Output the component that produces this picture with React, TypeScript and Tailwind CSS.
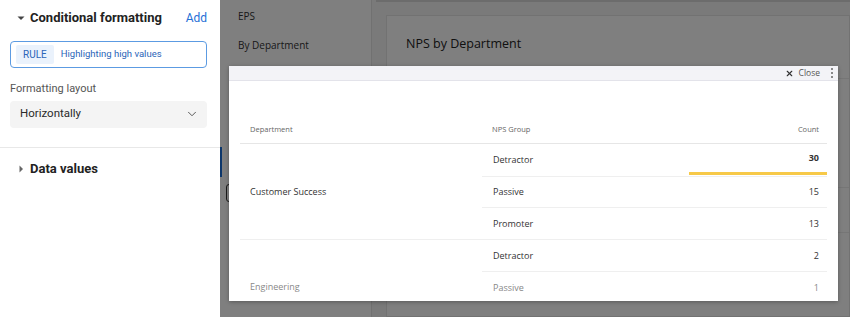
import React from "react";
import { ChevronDown, X } from "lucide-react";

const rows = [
  { dept: "Customer Success", items: [{ group: "Detractor", count: 30, top: true }, { group: "Passive", count: 15 }, { group: "Promoter", count: 13 }] },
  { dept: "Engineering", faded: true, items: [{ group: "Detractor", count: 2 }, { group: "Passive", count: 1 }] },
];

function Caret({ dir }: { dir: "down" | "right" }) {
  return (
    <svg width="8" height="8" viewBox="0 0 8 8" className="shrink-0">
      {dir === "down" ? <path d="M0.5 2.5 L7.5 2.5 L4 6 Z" fill="#444" /> : <path d="M2.5 0.5 L6 4 L2.5 7.5 Z" fill="#666" />}
    </svg>
  );
}

function SidePanel() {
  return (
    <div className="w-[220px] shrink-0 bg-white flex flex-col font-['Roboto',sans-serif]">
      <div className="pl-[10px] pr-[13px] pt-[9px] pb-[19px] border-b border-[#e8e8e8]">
        <div className="flex items-center h-[18px] pl-[7px]">
          <Caret dir="down" />
          <span className="ml-[5px] text-[13px] font-bold text-[#222]">Conditional formatting</span>
          <span className="ml-auto text-[12px] text-[#1f6fd6]">Add</span>
        </div>
        <div className="mt-[14px] h-[27px] border border-[#5c9be2] rounded-[4px] flex items-center px-[5px]">
          <span className="h-[19px] px-[7px] flex items-center bg-[#eaf2fc] rounded-[2px] text-[10px] text-[#2b65b8]">RULE</span>
          <span className="ml-[7px] text-[9.5px] text-[#2b65b8]">Highlighting high values</span>
        </div>
        <div className="mt-[13px] text-[11px] text-[#555]">Formatting layout</div>
        <div className="mt-[3px] h-[27px] bg-[#f4f4f4] rounded-[4px] flex items-center pl-[10px] pr-[8px]">
          <span className="text-[11.5px] text-[#2a2a2a]">Horizontally</span>
          <ChevronDown className="ml-auto w-[14px] h-[14px] text-[#444]" strokeWidth={1.5} />
        </div>
      </div>
      <div className="flex items-center h-[18px] mt-[12px] pl-[17px]">
        <Caret dir="right" />
        <span className="ml-[5px] text-[13px] font-bold text-[#222]">Data values</span>
      </div>
    </div>
  );
}

function Backdrop() {
  return (
    <div className="absolute inset-0 flex bg-[#f4f4f4] font-['Open_Sans',sans-serif]">
      <div className="w-[152px] shrink-0 bg-white border-r border-[#e2e2e2] flex flex-col">
        <div className="pt-[8px] pl-[18px] text-[10px] text-[#333] leading-[16px]">EPS</div>
        <div className="mt-[13px] pl-[18px] text-[10px] text-[#333] leading-[16px]">By Department</div>
        <div className="mt-[94px] w-[2px] h-[30px] bg-[#1a6fd6]" />
        <div className="mt-[7px] ml-[6px] w-[40px] h-[18px] border border-[#333] rounded-[3px]" />
      </div>
      <div className="flex-1 flex flex-col">
        <div className="h-[2px] ml-[4px] bg-[#d8d8d8]" />
        <div className="mt-[13px] ml-[14px] flex-1 bg-white border border-[#e4e4e4] flex flex-col">
          <div className="pt-[19px] pl-[19px] text-[12.5px] text-[#222]">NPS by Department</div>
          <div className="mt-[24px] border-b border-[#ececec]" />
          <div className="mt-[108px] border-b border-[#ececec]" />
          <div className="mt-[44px] border-b border-[#ececec]" />
        </div>
      </div>
      <div className="absolute inset-0 bg-black/50" />
    </div>
  );
}

function Modal() {
  return (
    <div className="absolute left-[9px] top-[66px] w-[609px] h-[235px] bg-white shadow-[0_1px_4px_rgba(0,0,0,0.3)] flex flex-col overflow-hidden font-['Open_Sans',sans-serif]">
      <div className="h-[15px] shrink-0 bg-[#f3f3f7] border-b border-[#e3e3ea] flex items-center justify-end pr-[5px]">
        <X className="w-[9px] h-[9px] text-[#333]" strokeWidth={3} />
        <span className="ml-[5px] text-[8.5px] text-[#555]">Close</span>
        <span className="ml-[11px] flex flex-col gap-[2px]">
          <span className="w-[2px] h-[2px] rounded-full bg-[#666]" />
          <span className="w-[2px] h-[2px] rounded-full bg-[#666]" />
          <span className="w-[2px] h-[2px] rounded-full bg-[#666]" />
        </span>
      </div>
      <div className="px-[11px] pt-[35px] flex flex-col">
        <div className="h-[28px] flex items-center border-b border-[#e6e6e6] text-[7.5px] text-[#666]">
          <span className="w-[242px] pl-[10px]">Department</span>
          <span className="pl-[10px]">NPS Group</span>
          <span className="ml-auto pr-[8px]">Count</span>
        </div>
        {rows.map((r) => (
          <div key={r.dept} className="flex border-b border-[#efefef]">
            <div className={`w-[242px] shrink-0 flex pl-[10px] text-[9px] ${r.faded ? "text-[#888] items-end pb-[9px]" : "text-[#333] items-center"}`}>{r.dept}</div>
            <div className="flex-1 flex flex-col">
              {r.items.map((it, i) => (
                <div key={i} className={`h-[31.5px] flex ${i > 0 ? "border-t border-[#efefef]" : ""} ${r.faded && i === 1 ? "text-[#888]" : "text-[#333]"}`}>
                  <span className="pl-[11px] flex items-center text-[9px]">{it.group}</span>
                  <div className="ml-auto w-[138px] flex flex-col">
                    <span className={`flex-1 flex items-center justify-end pr-[8px] text-[9px] ${it.top ? "font-bold" : ""}`}>{it.count}</span>
                    {it.top && <span className="h-[3px] mb-[1px] bg-[#f7c948]" />}
                  </div>
                </div>
              ))}
            </div>
          </div>
        ))}
      </div>
    </div>
  );
}

export default function App() {
  return (
    <div className="w-[850px] h-[317px] flex overflow-hidden">
      <SidePanel />
      <div className="relative flex-1 overflow-hidden">
        <Backdrop />
        <Modal />
      </div>
    </div>
  );
}
